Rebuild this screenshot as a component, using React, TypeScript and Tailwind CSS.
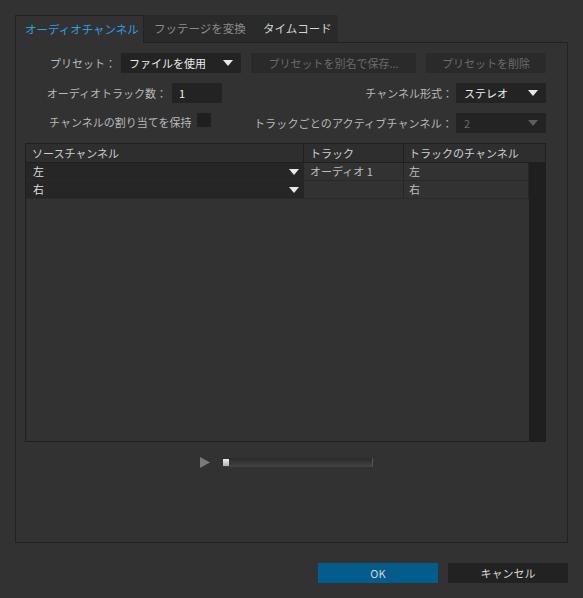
import React from "react";

const font = { fontFamily: '"Noto Sans CJK JP", "Noto Sans", sans-serif' };

const Caret: React.FC<{ dim?: boolean }> = ({ dim }) => (
  <svg width="10" height="6" viewBox="0 0 10 6" className="shrink-0">
    <path d="M0 0h10L5 6z" fill={dim ? "#5e5e5e" : "#e8e8e8"} />
  </svg>
);

const Select: React.FC<{ value: string; className: string; dim?: boolean }> = ({
  value,
  className,
  dim,
}) => (
  <div
    className={`flex h-[20px] items-center justify-between bg-[#232323] pl-[8px] pr-[8px] ${className} ${
      dim ? "text-[#6a6a6a]" : "text-[#ececec]"
    }`}
  >
    <span>{value}</span>
    <Caret dim={dim} />
  </div>
);

const SourceRow: React.FC<{ src: string; track: string; ch: string }> = ({ src, track, ch }) => (
  <div className="flex h-[18px] border-b border-[#2a2a2a]">
    <div className="flex w-[277px] items-center justify-between bg-[#262626] pl-[7px] pr-[4px] text-[#dcdcdc]">
      <span>{src}</span>
      <Caret />
    </div>
    <div className="flex w-[101px] items-center border-l border-r border-[#262626] bg-[#323232] pl-[6px] text-[#bdbdbd]">
      {track}
    </div>
    <div className="flex flex-1 items-center border-r border-[#262626] bg-[#323232] pl-[5px] text-[#bdbdbd]">
      {ch}
    </div>
  </div>
);

export default function App() {
  return (
    <div
      className="flex h-[598px] w-[583px] flex-col whitespace-nowrap bg-[#323232] pl-[15px] pt-[15px] text-[11px] leading-none"
      style={font}
    >
      {/* tabs */}
      <div className="flex h-[27px] text-[11.5px]">
        <div className="relative z-10 -mb-px flex w-[129px] items-center border border-b-0 border-[#222] bg-[#323232] pl-[9px] text-[#2a9fe4]">
          オーディオチャンネル
        </div>
        <div className="flex w-[109px] items-center bg-[#2a2a2a] pl-[10px] text-[#8a8a8a]">
          フッテージを変換
        </div>
        <div className="flex w-[85px] items-center bg-[#2a2a2a] pl-[10px] text-[#d4d4d4]">
          タイムコード
        </div>
      </div>

      {/* panel */}
      <div className="flex h-[501px] w-[553px] flex-col border border-[#222] pr-[21px]">
        <div className="mt-[10px] flex h-[20px] items-center">
          <span className="w-[102px] pr-[2px] text-right text-[#b8b8b8]">プリセット：</span>
          <Select value="ファイルを使用" className="ml-[3px] w-[120px]" />
          <div className="ml-[10px] flex h-[20px] w-[165px] items-center justify-center bg-[#2a2a2a] text-[#6a6a6a]">
            プリセットを別名で保存...
          </div>
          <div className="ml-[10px] flex h-[20px] w-[120px] items-center justify-center bg-[#2a2a2a] text-[#6a6a6a]">
            プリセットを削除
          </div>
        </div>

        <div className="mt-[10px] flex h-[20px] items-center">
          <span className="w-[153px] pr-[2px] text-right text-[#b8b8b8]">オーディオトラック数：</span>
          <div className="ml-[3px] flex h-[20px] w-[50px] items-center bg-[#232323] pl-[7px] text-[#ececec]">1</div>
          <span className="flex-1 pr-[3px] text-right text-[#b8b8b8]">チャンネル形式：</span>
          <Select value="ステレオ" className="w-[90px]" />
        </div>

        <div className="mt-[10px] flex h-[20px] items-center">
          <span className="ml-[33px] self-start pt-[4px] text-[#b8b8b8]">チャンネルの割り当てを保持</span>
          <div className="ml-[6px] h-[14px] w-[14px] self-start bg-[#1f1f1f]" />
          <span className="flex-1 pr-[3px] text-right tracking-[0.15px] text-[#b8b8b8]">
            トラックごとのアクティブチャンネル：
          </span>
          <Select value="2" className="w-[90px]" dim />
        </div>

        {/* table */}
        <div className="ml-[9px] mt-[10px] flex h-[299px] w-[521px] flex-col border border-[#1f1f1f]">
          <div className="flex h-[19px] border-b border-[#1f1f1f] bg-[#2e2e2e] text-[#cfcfcf]">
            <div className="flex w-[277px] items-center pl-[6px]">ソースチャンネル</div>
            <div className="flex w-[101px] items-center border-l border-r border-[#1f1f1f] pl-[6px]">トラック</div>
            <div className="flex flex-1 items-center pl-[5px]">トラックのチャンネル</div>
          </div>
          <div className="flex flex-1">
            <div className="flex-1">
              <SourceRow src="左" track="オーディオ 1" ch="左" />
              <SourceRow src="右" track="" ch="右" />
            </div>
            <div className="w-[16px] bg-[#1f1f1f]" />
          </div>
        </div>

        {/* player */}
        <div className="ml-[184px] mt-[15px] flex h-[10px] items-center">
          <svg width="10" height="11" viewBox="0 0 10 11">
            <path d="M0 0l10 5.5L0 11z" fill="#7a7a7a" />
          </svg>
          <div className="ml-[13px] flex h-[9px] w-[150px] items-center border-r border-[#555] bg-gradient-to-b from-[#2a2a2a] to-[#444]">
            <div className="h-[7px] w-[6px] bg-gradient-to-b from-[#f0f0f0] to-[#b0b0b0]" />
          </div>
        </div>
      </div>

      {/* footer buttons */}
      <div className="mt-[20px] flex h-[20px]">
        <div className="ml-[303px] flex w-[120px] items-center justify-center bg-[#035c8c] text-[#d8d8d8]">OK</div>
        <div className="ml-[10px] flex w-[120px] items-center justify-center bg-[#222] text-[#d8d8d8]">キャンセル</div>
      </div>
    </div>
  );
}
